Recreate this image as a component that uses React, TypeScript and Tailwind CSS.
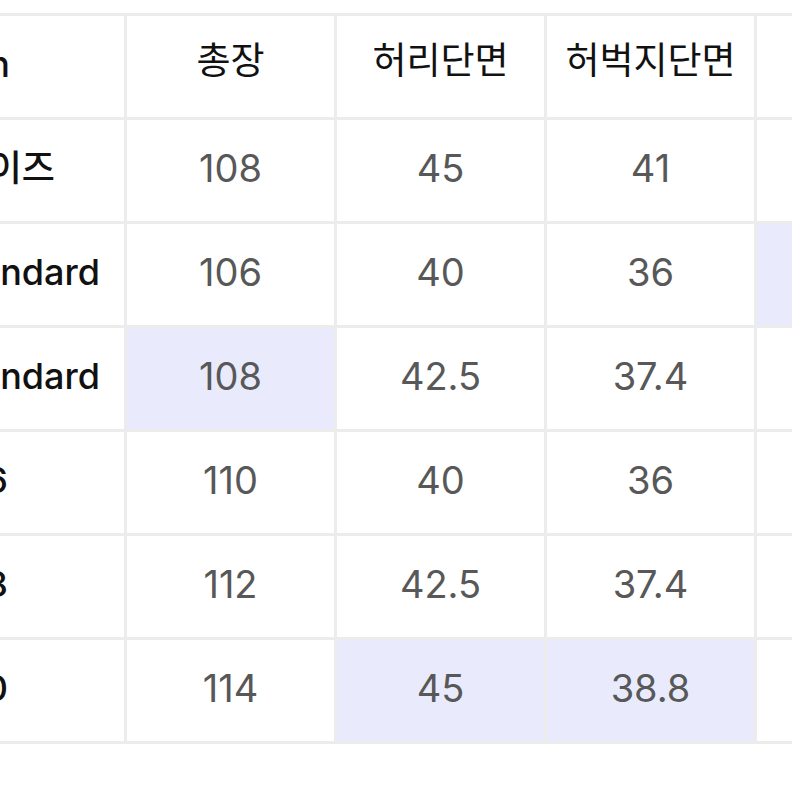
import React from "react";

const HL = "bg-[#e9ebfd]";

type Cell = { t: string; hl?: boolean };

const header = ["총장", "허리단면", "허벅지단면", "밑단단면"];

const rows: { label: string; pr: string; cells: Cell[] }[] = [
  { label: "실측사이즈", pr: "pr-[69px]", cells: [{ t: "108" }, { t: "45" }, { t: "41" }, { t: "21" }] },
  { label: "Slim Standard", pr: "pr-[24px]", cells: [{ t: "106" }, { t: "40" }, { t: "36" }, { t: "19", hl: true }] },
  { label: "Wide Standard", pr: "pr-[24px]", cells: [{ t: "108", hl: true }, { t: "42.5" }, { t: "37.4" }, { t: "21" }] },
  { label: "26", pr: "pr-[116px]", cells: [{ t: "110" }, { t: "40" }, { t: "36" }, { t: "20" }] },
  { label: "28", pr: "pr-[116px]", cells: [{ t: "112" }, { t: "42.5" }, { t: "37.4" }, { t: "21" }] },
  { label: "30", pr: "pr-[116px]", cells: [{ t: "114" }, { t: "45", hl: true }, { t: "38.8", hl: true }, { t: "22" }] },
];

export default function App() {
  return (
    <div
      className="w-[792px] h-[792px] overflow-hidden bg-white"
      style={{ fontFamily: '"Inter", "Noto Sans CJK KR", sans-serif' }}
    >
      <div className="ml-[-86px] mt-[13px] w-max">
        <div className="grid grid-cols-[207px_207px_207px_207px_207px] auto-rows-[101px] gap-[3px] p-[3px] bg-[#ececec]">
          <div className="bg-white flex items-center justify-end pr-[114px] text-[36px] font-medium text-[#111] pb-[6px]">
            Section
          </div>
          {header.map((h) => (
            <div
              key={h}
              className="bg-white flex items-center justify-center text-[37px] font-normal text-[#111] pb-[11px]"
            >
              {h}
            </div>
          ))}
          {rows.map((r) => (
            <React.Fragment key={r.label}>
              <div
                className={`bg-white flex items-center justify-end ${r.pr} text-[36px] font-medium text-[#111] whitespace-nowrap pb-[5px]`}
              >
                {r.label}
              </div>
              {r.cells.map((c, i) => (
                <div
                  key={i}
                  className={`${c.hl ? HL : "bg-white"} flex items-center justify-center text-[38px] text-[#585858] pb-[5px]`}
                >
                  {c.t}
                </div>
              ))}
            </React.Fragment>
          ))}
        </div>
      </div>
    </div>
  );
}
